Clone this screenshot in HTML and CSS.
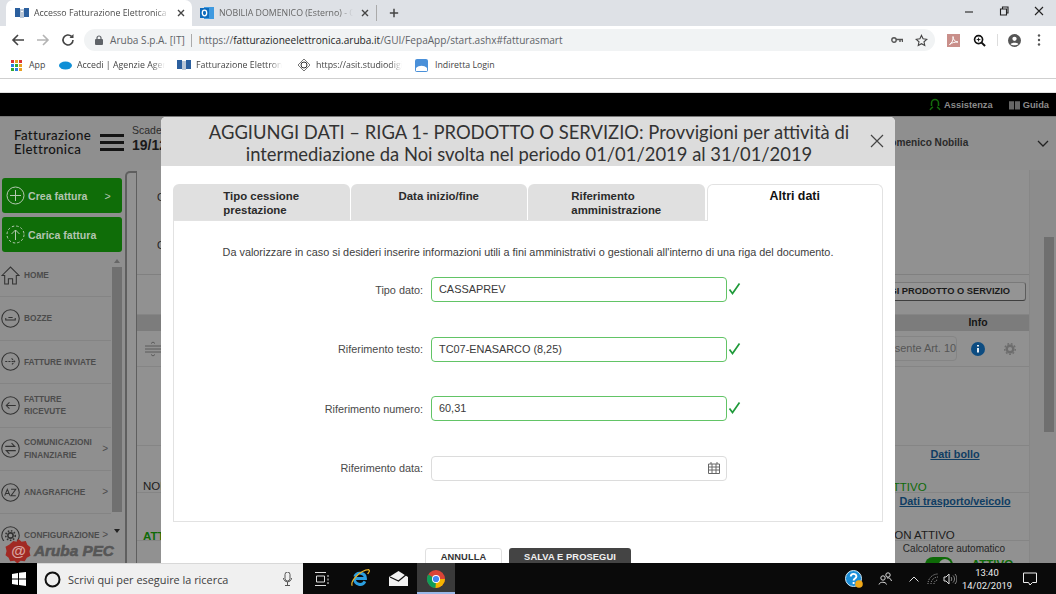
FILE: index.html
```html
<!DOCTYPE html>
<html lang="it">
<head>
<meta charset="utf-8">
<title>Accesso Fatturazione Elettronica</title>
<link rel="stylesheet" href="styles.css">
</head>
<body>
<div class="tabstrip">
  <div class="tab tab-active">
    <svg class="fav" width="14" height="12" viewBox="0 0 14 12"><rect x="0" y="1" width="5" height="9" fill="#2b5f9e"/><rect x="9" y="1" width="5" height="9" fill="#2b5f9e"/><rect x="5" y="2" width="4" height="9" fill="#b9c6d6"/><rect x="6" y="4" width="2" height="1" fill="#fff"/></svg>
    <span class="tab-title">Accesso Fatturazione Elettronica</span>
    <svg class="tab-x" width="10" height="10" viewBox="0 0 10 10"><path d="M2 2l6 6M8 2l-6 6" stroke="#444" stroke-width="1.4"/></svg>
  </div>
  <div class="tab">
    <svg class="fav" width="14" height="14" viewBox="0 0 14 14"><rect x="4" y="1" width="10" height="12" fill="#3f9ae0"/><rect x="0" y="2" width="9" height="10" fill="#0f6cbd"/><ellipse cx="4.5" cy="7" rx="2.2" ry="2.8" fill="none" stroke="#fff" stroke-width="1.3"/></svg>
    <span class="tab-title tab-title-dim">NOBILIA DOMENICO (Esterno) - Outlook</span>
    <svg class="tab-x" width="10" height="10" viewBox="0 0 10 10"><path d="M2 2l6 6M8 2l-6 6" stroke="#444" stroke-width="1.4"/></svg>
  </div>
  <span class="tab-sep"></span>
  <svg class="newtab" width="10" height="10" viewBox="0 0 12 12"><path d="M6 1v10M1 6h10" stroke="#444" stroke-width="1.8"/></svg>
  <div class="winctl">
    <svg width="10" height="10" viewBox="0 0 10 10"><path d="M1 6h8" stroke="#333" stroke-width="1.2"/></svg>
    <svg width="10" height="10" viewBox="0 0 10 10"><path d="M1.5 3h6v6h-6zM3.5 3V1h5.500v6h-1.500" fill="none" stroke="#222" stroke-width="1.100"/></svg>
    <svg width="10" height="10" viewBox="0 0 10 10"><path d="M1 1l8 8M9 1l-8 8" stroke="#222" stroke-width="1.100"/></svg>
  </div>
</div>

<div class="toolbar">
  <svg class="nav-ico" width="14" height="14" viewBox="0 0 14 14"><path d="M13 7H2M7 2L2 7l5 5" fill="none" stroke="#444" stroke-width="1.600"/></svg>
  <svg class="nav-ico" width="14" height="14" viewBox="0 0 14 14"><path d="M1 7h11M7 2l5 5-5 5" fill="none" stroke="#b4b4b4" stroke-width="1.600"/></svg>
  <svg class="nav-ico" width="14" height="14" viewBox="0 0 14 14"><path d="M12 7a5 5 0 1 1-1.500-3.600" fill="none" stroke="#444" stroke-width="1.600"/><path d="M12.500 1v4h-4z" fill="#444"/></svg>
  <div class="omnibox">
    <svg width="8" height="10" viewBox="0 0 8 10"><rect y="4" width="8" height="6" rx="1" fill="#5f6368"/><path d="M2 4.500V3a2 2 0 0 1 4 0v1.500" fill="none" stroke="#5f6368" stroke-width="1.200"/></svg>
    <span class="origin">Aruba S.p.A. [IT]</span>
    <span class="omni-sep"></span>
    <span class="url">https://<b>fatturazioneelettronica.aruba.it</b>/GUI/FepaApp/start.ashx#fatturasmart</span>
    <span class="omni-end">
      <svg width="12" height="8" viewBox="0 0 12 8"><circle cx="3" cy="4" r="2.200" fill="none" stroke="#555" stroke-width="1.400"/><path d="M5 3.500h6.500V6M9 4v2" fill="none" stroke="#555" stroke-width="1.400"/></svg>
      <svg width="13" height="13" viewBox="0 0 14 14"><path d="M7 1.500l1.700 3.700 4 .5-3 2.700.8 4L7 10.400 3.500 12.400l.8-4-3-2.700 4-.5z" fill="none" stroke="#444" stroke-width="1.200"/></svg>
    </span>
  </div>
  <svg class="ext-pdf" width="13" height="13" viewBox="0 0 13 13"><rect width="13" height="13" fill="#c98f8a"/><path d="M2.500 10.500C5 9 6.500 6 6 2.500c0 3 2 5.500 5 5.500-3 0-6 .5-8.500 2.500z" fill="none" stroke="#fff" stroke-width="1"/></svg>
  <svg class="ext-zoom" width="13" height="13" viewBox="0 0 14 14"><circle cx="6" cy="6" r="4.300" fill="none" stroke="#111" stroke-width="1.800"/><path d="M9 9l4 4" stroke="#111" stroke-width="2.200"/><path d="M4 6h4M6 4v4" stroke="#111" stroke-width="1"/></svg>
  <span class="ext-sep"></span>
  <svg class="ext-user" width="13" height="13" viewBox="0 0 14 14"><circle cx="7" cy="7" r="7" fill="#555"/><circle cx="7" cy="5.200" r="2.300" fill="#fff"/><path d="M2.800 11c1-2.200 7.400-2.200 8.400 0-1.500 1.500-6.900 1.500-8.400 0z" fill="#fff"/></svg>
  <svg class="ext-menu" width="4" height="12" viewBox="0 0 4 12"><circle cx="2" cy="1.500" r="1.200" fill="#555"/><circle cx="2" cy="6" r="1.200" fill="#555"/><circle cx="2" cy="10.500" r="1.200" fill="#555"/></svg>
</div>

<div class="bookmarks">
  <span class="bm bm-app">
    <svg width="11" height="11" viewBox="0 0 11 11"><g fill="#d33"><rect width="3" height="3"/></g><rect x="4" width="3" height="3" fill="#e8a020"/><rect x="8" width="3" height="3" fill="#d33"/><rect y="4" width="3" height="3" fill="#2a7de1"/><rect x="4" y="4" width="3" height="3" fill="#3a3"/><rect x="8" y="4" width="3" height="3" fill="#e8a020"/><rect y="8" width="3" height="3" fill="#3a3"/><rect x="4" y="8" width="3" height="3" fill="#2a7de1"/><rect x="8" y="8" width="3" height="3" fill="#e8a020"/></svg>
    App
  </span>
  <span class="bm bm-sf">
    <svg width="13" height="9" viewBox="0 0 13 9"><ellipse cx="6.500" cy="4.500" rx="6.500" ry="4" fill="#0f8fd6"/></svg>
    <span class="bm-cut bm-cut-a">Accedi | Agenzie Agenti</span>
  </span>
  <span class="bm bm-fe">
    <svg width="14" height="12" viewBox="0 0 14 12"><rect x="0" y="1" width="5" height="9" fill="#2b5f9e"/><rect x="9" y="1" width="5" height="9" fill="#2b5f9e"/><rect x="5" y="2" width="4" height="9" fill="#b9c6d6"/></svg>
    <span class="bm-cut bm-cut-b">Fatturazione Elettronica</span>
  </span>
  <span class="bm bm-as">
    <svg width="14" height="14" viewBox="0 0 14 14"><path d="M7 1l6 6-6 6-6-6z" fill="none" stroke="#777"/><circle cx="7" cy="7" r="3" fill="none" stroke="#333"/></svg>
    <span class="bm-cut bm-cut-c">https://asit.studiodigitale</span>
  </span>
  <span class="bm bm-in">
    <svg width="13" height="13" viewBox="0 0 13 13"><rect width="13" height="13" rx="2" fill="#4a90d9"/><path d="M1 9c3-3 8-3 11 0v3H1z" fill="#fff"/></svg>
    Indiretta Login
  </span>
</div>
<div class="gap-strip"></div>
<div class="blackbar">
  <span class="bb-item">
    <svg width="12" height="13" viewBox="0 0 12 13"><path d="M2.500 8V5a3.500 3.500 0 0 1 7 0v3" fill="none" stroke="#136c0b" stroke-width="1.500"/><path d="M1 12c1-2 2-2.500 3-3M11 12c-1-2-2-2.500-3-3" stroke="#136c0b" stroke-width="1.500" fill="none"/></svg>
    Assistenza
  </span>
  <span class="bb-item">
    <svg width="11" height="10" viewBox="0 0 12 10"><path d="M0 1h5.500v9H0zM6.500 1H12v9H6.500z" fill="#666"/></svg>
    Guida
  </span>
</div>

<div class="app">
  <header class="app-head">
    <div class="brand">Fatturazione<br>Elettronica</div>
    <div class="burger"><i></i><i></i><i></i></div>
    <div class="expiry"><span>Scadenza</span><b>19/12/2019</b></div>
    <div class="account">Domenico Nobilia</div>
    <svg class="acc-chev" width="12" height="7" viewBox="0 0 12 7"><path d="M1 1l5 5 5-5" fill="none" stroke="#222" stroke-width="1.300"/></svg>
  </header>
  <div class="app-body">
    <aside class="sidebar">
      <div class="cta"><svg width="19" height="19" viewBox="0 0 19 19"><circle cx="9.500" cy="9.500" r="8.500" fill="none" stroke="#b5c9b2"/><path d="M9.500 4v11M4 9.500h11" stroke="#b5c9b2"/></svg><span>Crea fattura</span><em>&gt;</em></div>
      <div class="cta"><svg width="19" height="19" viewBox="0 0 19 19"><circle cx="9.500" cy="9.500" r="8.500" fill="none" stroke="#b5c9b2" stroke-dasharray="2.500 2"/><path d="M9.500 15V5M5.500 9l4-4 4 4" fill="none" stroke="#b5c9b2"/></svg><span>Carica fattura</span></div>
      <div class="menu-wrap">
        <nav class="menu">
          <div class="mi"><svg width="19" height="19" viewBox="0 0 18 18"><path d="M1 9l8-8 8 8h-2.500v8H11v-5H7v5H3.500V9z" fill="none" stroke="#333"/></svg><span>HOME</span></div>
          <div class="mi"><svg width="19" height="19" viewBox="0 0 18 18"><circle cx="9" cy="9" r="8.300" fill="none" stroke="#333"/><path d="M4.500 8.500v2h9v-2M7 8h4" fill="none" stroke="#333"/></svg><span>BOZZE</span></div>
          <div class="mi"><svg width="19" height="19" viewBox="0 0 18 18"><circle cx="9" cy="9" r="8.300" fill="none" stroke="#333"/><path d="M4 9h9M10 6l3 3-3 3" fill="none" stroke="#333" stroke-dasharray="2 1"/></svg><span>FATTURE INVIATE</span></div>
          <div class="mi"><svg width="19" height="19" viewBox="0 0 18 18"><circle cx="9" cy="9" r="8.300" fill="none" stroke="#333"/><path d="M14 9H5M8 6L5 9l3 3" fill="none" stroke="#333"/></svg><span>FATTURE<br>RICEVUTE</span></div>
          <div class="mi"><svg width="19" height="19" viewBox="0 0 18 18"><circle cx="9" cy="9" r="8.300" fill="none" stroke="#333"/><path d="M4 7h9l-3-3M14 11H5l3 3" fill="none" stroke="#333"/></svg><span>COMUNICAZIONI<br>FINANZIARIE</span><em>&gt;</em></div>
          <div class="mi"><svg width="19" height="19" viewBox="0 0 18 18"><circle cx="9" cy="9" r="8.300" fill="none" stroke="#333"/><path d="M3.500 12l2.500-6 2.500 6M4.500 10h3M9.500 6h4.500l-4.500 6H14" fill="none" stroke="#333"/></svg><span>ANAGRAFICHE</span><em>&gt;</em></div>
          <div class="mi"><svg width="19" height="19" viewBox="0 0 18 18"><circle cx="9" cy="9" r="8.300" fill="none" stroke="#333"/><circle cx="9" cy="9" r="2.500" fill="none" stroke="#333" stroke-width="1.500"/><circle cx="9" cy="9" r="4.500" fill="none" stroke="#333" stroke-dasharray="1.500 1.500" stroke-width="1.500"/></svg><span>CONFIGURAZIONE</span><em>&gt;</em></div>
        </nav>
        <div class="side-scroll"><i class="arrow-up"></i><i class="thumb"></i><i class="arrow-down"></i></div>
        <div class="pec-logo">
          <span class="seal">
            <svg width="27" height="27" viewBox="0 0 26 26"><path d="M13 1l3 2.500 4-.5 1.500 3.500 3 2.500-1 4 1 4-3.500 2-2 3.500-4-.5-3 2.500-3-2.500-4 .5-1.500-3.500-3-2.500 1-4-1-4 3.500-2L8 3l3 .5z" fill="#a12a24"/></svg>
            <b>@</b>
          </span>
          <span class="pec-name">Aruba PEC</span>
        </div>
      </div>
    </aside>
    <main class="content">
      <div class="gutter"></div>
      <div class="sheet">
        <div class="row r-top"><span class="lead">Cliente</span><span class="lead">Cedente</span></div>
        <div class="row r-btn"><span class="add-btn">AGGIUNGI PRODOTTO O SERVIZIO</span></div>
        <div class="row r-th"><span class="info-h">Info</span></div>
        <div class="row r-item">
          <svg width="18" height="16" viewBox="0 0 18 16"><path d="M1 5h16M1 8h16M1 11h16" stroke="#5b5b5b"/><path d="M7 2.500l2-1.500 2 1.500M7 13.500L9 15l2-1.500" fill="none" stroke="#5b5b5b"/></svg>
          <div class="item-right">
            <span class="vat">Esente Art. 10</span>
            <svg class="info-ico" width="14" height="14" viewBox="0 0 14 14"><circle cx="7" cy="7" r="7" fill="#0d4c81"/><path d="M7 3v1.500M7 6v4.500" stroke="#fff" stroke-width="1.800"/></svg>
            <svg class="gear-ico" width="12" height="12" viewBox="0 0 12 12"><circle cx="6" cy="6" r="3.300" fill="none" stroke="#6d6d6d" stroke-width="2.400"/><circle cx="6" cy="6" r="5.300" fill="none" stroke="#6d6d6d" stroke-width="1.400" stroke-dasharray="1.800 1.800"/></svg>
          </div>
        </div>
        <div class="row r-blank"></div>
        <div class="row r-bollo">
          <span class="state">NON ATTIVO</span>
          <div class="r-col"><a>Dati bollo</a><span class="on">ATTIVO</span></div>
        </div>
        <div class="row r-trasp">
          <span class="state on">ATTIVO</span>
          <div class="r-col"><a>Dati trasporto/veicolo</a><span class="off">NON ATTIVO</span></div>
        </div>
        <div class="row r-calc">
          <div class="r-col">
            <span class="calc">Calcolatore automatico</span>
            <div class="calc-state"><span class="toggle"><i></i></span><span class="on big">ATTIVO</span></div>
          </div>
        </div>
      </div>
      <div class="page-scroll"><i></i></div>
    </main>
  </div>

  <section class="modal">
    <div class="modal-head">
      <h1>AGGIUNGI DATI – RIGA 1- PRODOTTO O SERVIZIO: Provvigioni per attività di intermediazione da Noi svolta nel periodo 01/01/2019 al 31/01/2019</h1>
      <svg class="modal-x" width="14" height="14" viewBox="0 0 14 14"><path d="M1 1l12 12M13 1L1 13" stroke="#444" stroke-width="1.200"/></svg>
    </div>
    <div class="modal-body">
      <div class="tabs">
        <div class="mtab"><span>Tipo cessione<br>prestazione</span></div>
        <div class="mtab"><span>Data inizio/fine</span></div>
        <div class="mtab"><span>Riferimento<br>amministrazione</span></div>
        <div class="mtab mtab-on"><span>Altri dati</span></div>
      </div>
      <div class="panel">
        <p class="intro">Da valorizzare in caso si desideri inserire informazioni utili a fini amministrativi o gestionali all'interno di una riga del documento.</p>
        <div class="form">
          <div class="f-row"><label>Tipo dato:</label><div class="field ok">CASSAPREV</div><svg class="tick" width="13" height="13" viewBox="0 0 13 13"><path d="M1.500 7.500l3 4 7-10" fill="none" stroke="#1f9a3a" stroke-width="1.700"/></svg></div>
          <div class="f-row"><label>Riferimento testo:</label><div class="field ok">TC07-ENASARCO (8,25)</div><svg class="tick" width="13" height="13" viewBox="0 0 13 13"><path d="M1.500 7.500l3 4 7-10" fill="none" stroke="#1f9a3a" stroke-width="1.700"/></svg></div>
          <div class="f-row"><label>Riferimento numero:</label><div class="field ok">60,31</div><svg class="tick" width="13" height="13" viewBox="0 0 13 13"><path d="M1.500 7.500l3 4 7-10" fill="none" stroke="#1f9a3a" stroke-width="1.700"/></svg></div>
          <div class="f-row"><label>Riferimento data:</label><div class="field"><svg class="cal" width="12" height="12" viewBox="0 0 12 12"><path d="M.5 2h11v9.500H.5zM.5 5h11M.5 8h11M4 2v9.500M8 2v9.500" fill="none" stroke="#666"/><path d="M3 0v2M9 0v2" stroke="#666"/></svg></div></div>
        </div>
      </div>
      <div class="actions"><span class="btn-light">ANNULLA</span><span class="btn-dark">SALVA E PROSEGUI</span></div>
    </div>
  </section>
</div>

<footer class="taskbar">
  <div class="start"><svg width="14" height="14" viewBox="0 0 14 14"><path d="M0 2l6-1v5.500H0zM7 .8L14 0v6.500H7zM0 7.500h6V13l-6-1zM7 7.500h7V14l-7-1z" fill="#fff"/></svg></div>
  <div class="search">
    <svg width="17" height="17" viewBox="0 0 17 17"><circle cx="8.500" cy="8.500" r="7" fill="none" stroke="#111" stroke-width="2"/></svg>
    <span>Scrivi qui per eseguire la ricerca</span>
    <svg class="mic" width="9" height="14" viewBox="0 0 9 14"><rect x="2" y="0" width="5" height="9" rx="2.500" fill="none" stroke="#555"/><path d="M.5 6c0 5 8 5 8 0M4.500 10v3M2 13.500h5" fill="none" stroke="#555"/></svg>
  </div>
  <div class="task-ico t-view"><svg width="14" height="14" viewBox="0 0 14 14"><path d="M0 .5h11M0 13.500h11M1.500 4h8v6h-8z" fill="none" stroke="#ddd"/><path d="M13 3v2M13 6.500v2M13 10v2" stroke="#ddd"/></svg></div>
  <div class="task-ico t-ie"><svg width="21" height="21" viewBox="0 0 19 19"><path d="M4 9.500h10a5 5 0 0 0-9.700-1.500M4 10a5 5 0 0 0 9.500 2" fill="none" stroke="#2b9fe0" stroke-width="2.600"/><path d="M2 16C0 12 9 2 17 1.500c1.500 1-.5 3-1 4" fill="none" stroke="#e9b52b" stroke-width="1.100"/></svg></div>
  <div class="task-ico t-mail"><svg width="19" height="15" viewBox="0 0 19 15"><path d="M0 6l9.500-6L19 6v9H0z" fill="#f2f2f2"/><path d="M1 6l8.500 4L18 3" fill="none" stroke="#111" stroke-width="1.200"/></svg></div>
  <div class="task-ico t-chrome"><svg width="18" height="18" viewBox="0 0 18 18"><circle cx="9" cy="9" r="9" fill="#db4437"/><path d="M9 9L1.200 4.500A9 9 0 0 0 9 18z" fill="#0f9d58"/><path d="M9 9h9a9 9 0 0 1-9 9l-.5 0z" fill="#f4b400"/><circle cx="9" cy="9" r="4" fill="#fff"/><circle cx="9" cy="9" r="3.100" fill="#4285f4"/></svg></div>
  <div class="tray">
    <svg class="tr-help" width="18" height="18" viewBox="0 0 18 18"><circle cx="8.500" cy="8.500" r="8" fill="#1b8ed8" stroke="#cfe8f7"/><path d="M5.800 6.500c0-3.500 5.600-3.500 5.600 0 0 2-2.800 2-2.800 4M8.600 12v2" fill="none" stroke="#fff" stroke-width="1.900"/><circle cx="14" cy="14" r="3.800" fill="#f0a818"/></svg>
    <svg class="tr-people" width="14" height="13" viewBox="0 0 14 13"><circle cx="5" cy="6" r="2.200" fill="none" stroke="#ddd"/><path d="M1 12.500c.5-3 7-3 7.500 0" fill="none" stroke="#ddd"/><circle cx="10" cy="3" r="2.200" fill="none" stroke="#ddd"/><path d="M9 6c2-.5 4 .5 4.500 3" fill="none" stroke="#ddd"/></svg>
    <svg class="tr-up" width="10" height="6" viewBox="0 0 10 6"><path d="M.5 5.500L5 1l4.500 4.500" fill="none" stroke="#ddd"/></svg>
    <svg class="tr-wifi" width="13" height="12" viewBox="0 0 13 12"><path d="M1 11A10 10 0 0 1 11 1M4 11a7 7 0 0 1 7-7M7 11a4 4 0 0 1 4-4" fill="none" stroke="#aaa" stroke-dasharray="1 1"/></svg>
    <svg class="tr-vol" width="14" height="12" viewBox="0 0 14 12"><path d="M1 4h2l3-3v10L3 8H1z" fill="none" stroke="#ddd"/><path d="M8 4c1 1 1 3 0 4M10 2.500c2 2 2 5 0 7M12 1c2.500 3 2.500 7 0 10" fill="none" stroke="#888"/></svg>
    <div class="clock"><span>13:40</span><span>14/02/2019</span></div>
    <svg class="tr-note" width="14" height="14" viewBox="0 0 14 14"><path d="M.5 1h13v9.500H9.500L7 13l-1.500-2.500H.5z" fill="none" stroke="#eee"/></svg>
  </div>
</footer>
</body>
</html>
```
FILE: styles.css
```css
* { box-sizing: border-box; }
html, body { margin: 0; padding: 0; }
body { width: 1056px; height: 594px; overflow: hidden; background: #fff; font-family: "Liberation Sans", Arial, sans-serif; }
svg { display: block; flex: none; }

/* browser chrome */
.tabstrip { height: 26px; background: #dee1e6; display: flex; align-items: center; padding-left: 6px; }
.tab { width: 186px; height: 26px; display: flex; align-items: center; padding-left: 9px; gap: 5px; font: 8.800px "Open Sans", sans-serif; color: #4a4a4a; }
.tab-active { background: #fff; border-radius: 7px 7px 0 0; }
.tab-title { width: 135px; overflow: hidden; white-space: nowrap; -webkit-mask-image: linear-gradient(90deg, #000 90%, transparent); mask-image: linear-gradient(90deg, #000 90%, transparent); }
.tab-title-dim { width: 134px; color: #666; }
.tab-x { margin-left: 2px; }
.tab + .tab { width: 184px; padding-left: 8px; }
.tab-sep { width: 1px; height: 16px; background: #aaa; }
.newtab { margin-left: 12px; }
.winctl { margin-left: auto; display: flex; gap: 25px; padding: 0 12px 4px 0; align-items: center; }

.toolbar { height: 26px; padding: 2px 0 0 11px; background: #fff; display: flex; align-items: center; }
.nav-ico { margin-right: 11px; }
.nav-ico:nth-child(3) { margin-right: 9px; }
.omnibox { width: 851px; height: 22px; border-radius: 11px; background: #f1f3f4; display: flex; align-items: center; padding-left: 11px; font: 10.100px "Open Sans", sans-serif; color: #5f6368; white-space: nowrap; }
.origin { margin-left: 7px; }
.omni-sep { width: 1px; height: 13px; background: #aaa; margin: 0 7px 0 6px; }
.url b { font-weight: 400; color: #1f1f1f; }
.omni-end { margin-left: auto; display: flex; align-items: center; gap: 12px; padding-right: 7px; }
.ext-pdf { margin-left: 12px; }
.ext-zoom { margin-left: 13px; }
.ext-sep { width: 1px; height: 12px; background: #ddd; margin-left: 11px; }
.ext-user { margin-left: 10px; }
.ext-menu { margin-left: 16px; }

.bookmarks { height: 27px; background: #fff; border-bottom: 1px solid #cfcfcf; display: flex; align-items: center; font: 8.800px "Open Sans", sans-serif; color: #444; position: relative; white-space: nowrap; }
.bm { display: flex; align-items: center; gap: 7px; }
.bm-app { margin-left: 11px; width: 48px; }
.bm-sf { width: 118px; gap: 5px; }
.bm-fe { width: 120px; gap: 5px; }
.bm-as { width: 118px; gap: 5px; }
.bm-cut { overflow: hidden; -webkit-mask-image: linear-gradient(90deg, #000 85%, transparent); mask-image: linear-gradient(90deg, #000 85%, transparent); }
.bm-cut-a { width: 88px; }
.bm-cut-b { width: 86px; }
.bm-cut-c { width: 86px; }
.gap-strip { height: 14px; background: #fff; border-bottom: 1px solid #e0e0e0; }
.blackbar { height: 23px; background: #000; display: flex; justify-content: flex-end; align-items: center; gap: 16px; padding-right: 7px; font: bold 9.300px "Liberation Sans", sans-serif; color: #8b8b8b; }
.bb-item { display: flex; align-items: center; gap: 3px; }

/* dimmed application */
.app { position: relative; height: 447px; background: #8f8f8f; overflow: hidden; border-top: 1px solid #777; display: flex; flex-direction: column; }
.app-head { height: 53px; flex: none; display: flex; position: relative; padding-left: 14px; align-items: flex-start; color: #141414; }
.brand { font: 500 13.300px/13.500px Lato, sans-serif; letter-spacing: .35px; margin-top: 12px; width: 86px; white-space: nowrap; }
.burger { width: 24px; margin-top: 17px; display: flex; flex-direction: column; gap: 4px; }
.burger i { display: block; height: 3px; background: #141414; }
.expiry { margin: 7px 0 0 8px; display: flex; flex-direction: column; font-size: 10.500px; color: #2c2c2c; }
.expiry b { font-size: 14px; margin-top: 1px; color: #1a1a1a; }
.account { position: absolute; left: 883px; top: 20px; font: bold 10.100px "Liberation Sans", sans-serif; color: #2a2a2a; white-space: nowrap; }
.acc-chev { position: absolute; left: 1037px; top: 23px; }
.app-body { flex: 1; display: flex; min-height: 0; }

.sidebar { width: 125px; flex: none; padding-left: 2px; display: flex; flex-direction: column; gap: 4px; padding-top: 8px; }
.cta { width: 120px; height: 35px; flex: none; background: #0f6d08; border-radius: 3px; display: flex; align-items: center; padding: 0 0 0 4px; gap: 3px; font: bold 10.600px "Liberation Sans", sans-serif; color: #b3c4b0; }
.cta em { font-style: normal; margin-left: 14px; font-weight: 400; }
.menu-wrap { flex: 1; position: relative; margin-left: -2px; min-height: 0; margin-top: -3px; }
.menu { height: 288px; overflow: hidden; width: 111px; padding-top: 1px; }
.mi { height: 43.400px; border-bottom: 1px solid #848484; display: flex; align-items: center; gap: 4px; padding-left: 1px; font: bold 8.300px/12.500px "Liberation Sans", sans-serif; color: #4c4c4c; position: relative; }
.mi em { position: absolute; right: 3px; font-style: normal; font-weight: 400; font-size: 10px; }
.mi:last-child span { margin-right: -6px; }
.side-scroll { position: absolute; left: 112px; top: 0; width: 10px; height: 287px; display: flex; flex-direction: column; align-items: center; }
.thumb { display: block; width: 10px; height: 245px; background: #707070; margin-top: 4px; }
.arrow-up, .arrow-down { display: block; width: 0; height: 0; margin-top: 6px; border: 3px solid transparent; border-top: 0; border-bottom: 4px solid #666; }
.arrow-down { margin-top: 17px; border-bottom: 0; border-top: 4px solid #222; }
.pec-logo { position: absolute; left: 0; top: 284px; height: 28px; width: 122px; padding-left: 5px; display: flex; align-items: center; gap: 2px; background: linear-gradient(#8f8f8f, #8f8f8f) 0 4px / 122px 30px no-repeat; }
.seal { position: relative; display: block; width: 27px; height: 27px; }
.seal b { position: absolute; left: 0; right: 0; top: 5px; text-align: center; font: bold 15px/16px "Liberation Sans", sans-serif; color: #d9a5a0; }
.pec-name { font: italic bold 15.300px "Liberation Sans", sans-serif; color: #565656; -webkit-text-stroke: .6px #565656; white-space: nowrap; }

.content { flex: 1; min-width: 0; display: flex; position: relative; margin-top: 0; }
.gutter { width: 12px; margin-top: 1px; border: solid #5f5f5f; border-width: 2px 1px 0 2px; border-radius: 5px 0 0 0; background: #929292; }
.sheet { width: 893px; flex: none; border-right: 1px solid #878787; display: flex; flex-direction: column; background: #919191; font-size: 10.500px; color: #222; }
.row { display: flex; justify-content: space-between; flex: none; border-bottom: 1px solid #858585; position: relative; }
.r-top { height: 105px; flex-direction: column; justify-content: flex-start; padding-left: 20px; gap: 37px; padding-top: 22px; border-bottom-color: #808080; }
.lead { height: 11px; line-height: 11px; }
.r-btn { height: 40px; justify-content: flex-end; align-items: flex-start; padding: 7px 3px 0 0; }
.add-btn { width: 300px; height: 19px; border: 1px solid #7a7a7a; border-right: 1px solid #5d5d5d; border-bottom: 1px solid #3f3f3f; border-radius: 3px; background: #949494; font: bold 9.300px/17px "Liberation Sans", sans-serif; color: #1a1a1a; text-align: right; padding-right: 15px; white-space: nowrap; }
.r-th { height: 16px; background: #7c7c7c; justify-content: flex-end; border: 0; }
.info-h { font: bold 10.400px/16px "Liberation Sans", sans-serif; color: #151515; width: 102px; text-align: center; }
.r-item { height: 36px; align-items: center; padding-left: 7px; }
.item-right { display: flex; align-items: center; }
.vat { width: 100px; height: 25px; border: 1px solid #858585; border-radius: 4px; font: 10.900px/23px "Liberation Sans", sans-serif; color: #555; text-align: right; padding-right: 0; white-space: nowrap; }
.info-ico { margin-left: 14px; }
.gear-ico { margin: 1px 13px 0 19px; }
.r-blank { height: 79px; }
.r-bollo { height: 47px; padding-top: 33px; }
.state { font-size: 11.500px; line-height: 14px; padding-left: 6px; white-space: nowrap; color: #1c1c1c; }
.state.on { font-weight: bold; color: #0e6a07; }
.r-col { width: 150px; position: absolute; right: 0; top: 0; display: flex; flex-direction: column; align-items: center; padding-left: 2px; }
.r-col a { font: bold 10.800px/13px "Liberation Sans", sans-serif; color: #0f3d63; text-decoration: underline; white-space: nowrap; }
.r-bollo a { margin-top: 2px; }
.r-col .on, .r-col .off { position: absolute; left: 0; white-space: nowrap; font-size: 11.500px; line-height: 14px; }
.r-col .on { color: #0e6a07; top: 34px; left: 7px; font-weight: 400; }
.r-col .off { color: #1c1c1c; top: 35px; left: 7px; }
.r-trasp { height: 48px; padding-top: 36px; }
.r-trasp a { margin-top: 2px; }
.r-calc { height: 30px; border: 0; }
.r-calc .r-col { position: absolute; top: 1px; padding-left: 0; }
.calc { font-size: 10px; line-height: 12px; margin-top: 1px; white-space: nowrap; color: #262626; }
.calc-state { position: relative; display: flex; align-items: flex-start; gap: 19px; margin-top: 2px; padding-left: 30px; }
.toggle { width: 28px; height: 16px; border-radius: 8px; background: #0e6a07; position: relative; display: block; }
.toggle i { position: absolute; right: 2px; top: 2px; width: 12px; height: 12px; border-radius: 50%; background: #999; }
.calc-state .big { position: static; font-weight: bold; font-size: 11.500px; }
.page-scroll { flex: 1; padding: 67px 2px 0 14px; background: #8c8c8c; }
.page-scroll i { display: block; height: 195px; background: #6f6f6f; width: 10px; }

/* modal */
.modal { position: absolute; left: 161px; top: 0; width: 734px; height: 460px; background: #fff; border-radius: 5px 5px 0 0; }
.modal-head { height: 49px; background: #dcdcdc; padding: 4px 40px 0 42px; position: relative; border-radius: 5px 5px 0 0; }
.modal-head h1 { margin: 0; font: 400 18.400px/22px Lato, sans-serif; color: #333; text-align: center; }
.modal-x { position: absolute; right: 11px; top: 17px; }
.modal-body { padding: 18px 12px 0; }
.tabs { display: flex; gap: 1px; position: relative; z-index: 1; }
.mtab { width: 177px; height: 36px; background: #e0e0e0; border-radius: 6px 6px 0 0; display: flex; justify-content: center; padding-top: 5px; font: bold 11.400px/14px "Liberation Sans", sans-serif; color: #2a2a2a; }
.mtab-on { margin-left: 1px; background: #fff; border: 1px solid #e2e2e2; border-bottom: 0; height: 37px; font-size: 12.400px; color: #111; padding-top: 4px; }
.panel { height: 302px; margin-top: -1px; border: 1px solid #e2e2e2; padding-top: 25px; }
.intro { margin: 0; font-size: 10.850px; line-height: 12px; text-align: center; color: #3d3d3d; white-space: nowrap; }
.form { margin-top: 19px; display: flex; flex-direction: column; gap: 34.600px; }
.f-row { height: 25px; display: flex; align-items: center; font-size: 10.850px; color: #4a4a4a; }
.f-row label { width: 249px; text-align: right; margin-right: 8px; }
.field { width: 296px; height: 25px; border: 1px solid #dcdcdc; border-radius: 4px; padding-left: 7px; font-size: 10.900px; line-height: 23px; color: #3a3a3a; display: flex; align-items: center; }
.field.ok { border-color: #62c466; }
.tick { margin: -2px 0 0 1px; }
.cal { margin-left: auto; margin-right: 6px; }
.actions { display: flex; gap: 7px; margin: 26px 0 0 252px; font: bold 9.300px/16px "Liberation Sans", sans-serif; letter-spacing: .1px; text-align: center; }
.btn-light { width: 77px; height: 24px; border: 1px solid #e0e0e0; border-radius: 3px; color: #333; }
.btn-dark { width: 122px; height: 24px; background: #444; border-radius: 3px; color: #f0f0f0; line-height: 18px; }

/* taskbar */
.taskbar { height: 31px; background: #0a0a0a; display: flex; align-items: center; position: relative; }
.start { width: 37px; height: 31px; background: #000; display: flex; align-items: center; justify-content: center; }
.search { width: 266px; height: 31px; background: #f0f0f0; border-top: 1px solid #d8d8d8; display: flex; align-items: center; padding-left: 7px; gap: 7px; font: 10.900px "Open Sans", sans-serif; color: #3d3d3d; }
.mic { margin-left: auto; margin-right: 11px; }
.task-ico { width: 38px; height: 31px; display: flex; align-items: center; justify-content: center; }
.t-chrome { background: #3a3a3a; border-bottom: 2px solid #9ab8e8; padding-top: 2px; }
.tray { margin-left: auto; display: flex; align-items: center; height: 31px; color: #eee; }
.tr-people { margin-left: 15px; }
.tr-up { margin-left: 17px; }
.tr-wifi { margin-left: 8px; }
.tr-vol { margin-left: 3px; }
.clock { display: flex; flex-direction: column; align-items: center; font: 9.400px/13px Roboto, sans-serif; margin-left: 8px; width: 44px; white-space: nowrap; }
.tr-note { margin: 0 19px 0 14px; }
```
